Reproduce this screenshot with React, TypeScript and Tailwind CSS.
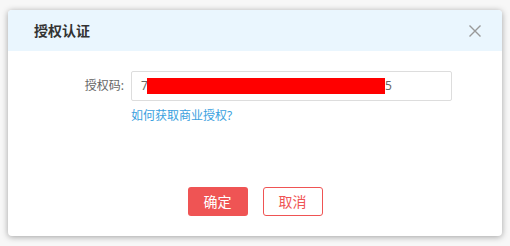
const font = { fontFamily: '"Noto Sans", "Noto Sans CJK SC", sans-serif' };

const AuthDialog = () => {
  return (
    <div className="w-[510px] h-[246px] bg-[#f7f7f7] pt-[10px] pl-[8px]" style={font}>
      <div className="w-[494px] h-[226px] bg-white rounded-[4px] shadow-[0_1px_6px_rgba(0,0,0,0.35)] overflow-hidden flex flex-col">
        <div className="h-[41px] bg-[#eaf6fe] flex items-center justify-between pl-[26px] pr-[21px]">
          <span className="text-[14px] font-bold text-[#333]">授权认证</span>
          <button className="w-[12px] h-[12px] flex items-center justify-center">
            <svg width="12" height="12" viewBox="0 0 12 12">
              <path d="M0.5 0.5 L11.5 11.5 M11.5 0.5 L0.5 11.5" stroke="#999" strokeWidth="1.4" fill="none" />
            </svg>
          </button>
        </div>
        <div className="flex flex-col pt-[20px]">
          <div className="flex items-center">
            <label className="w-[116px] text-right pr-[0px] text-[12px] text-[#666]">授权码:</label>
            <div className="ml-[7px] w-[321px] h-[30px] border border-[#ddd] rounded-[2px] flex items-center pl-[9px] text-[12px] text-[#666]">
              <span>7</span>
              <span className="inline-block w-[238px] h-[16px] bg-[#ff0000] -ml-[1px]" />
              <span>5</span>
            </div>
          </div>
          <a className="ml-[123px] mt-[6px] text-[12px] text-[#3ba1e0] cursor-pointer">如何获取商业授权?</a>
        </div>
        <div className="flex justify-center gap-[15px] mt-[62px]">
          <button className="w-[60px] h-[29px] rounded-[3px] bg-[#ef5454] text-white text-[14px]">确定</button>
          <button className="w-[60px] h-[29px] rounded-[3px] border border-[#ef5454] text-[#ef5454] text-[14px] bg-white">取消</button>
        </div>
      </div>
    </div>
  );
};

export default function App() {
  return <AuthDialog />;
}
